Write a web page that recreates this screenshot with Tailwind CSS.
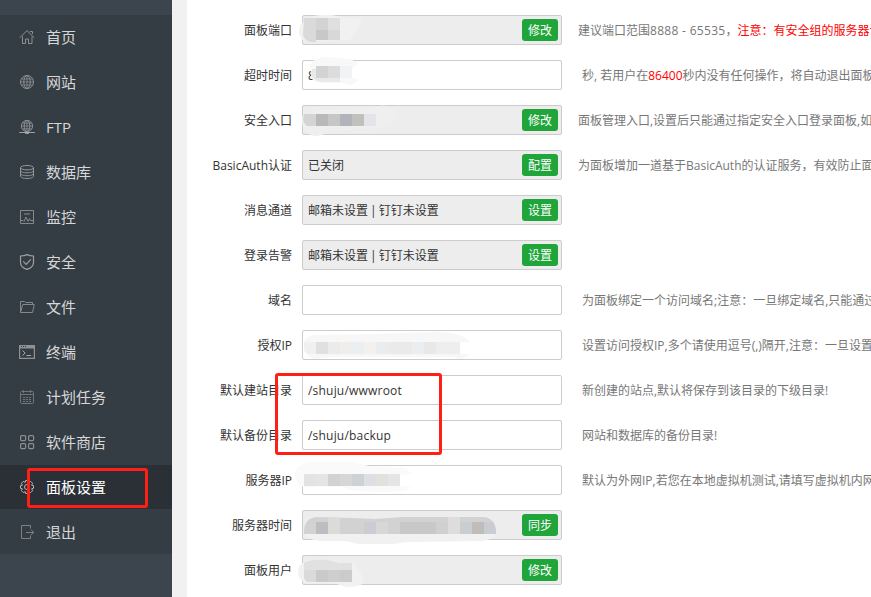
<!DOCTYPE html>
<html lang="zh-CN">
<head>
    <meta charset="UTF-8">
    <meta name="viewport" content="width=device-width, initial-scale=1.0">
    <title>面板设置</title>
    <script src="https://cdn.jsdelivr.net/npm/@tailwindcss/browser@4"></script>
</head>
<body class="relative flex h-[597px] w-[871px] overflow-hidden bg-white font-['Open_Sans','Noto_Sans_CJK_SC',sans-serif] text-xs text-[#333]">

    <!-- Sidebar -->
    <aside class="w-[172px] shrink-0 bg-[#3c444d] pt-[15px]">
        <nav class="bg-[#353d44] text-[15px] text-[#d6d7d9]">
            <a class="flex h-[45px] items-center gap-[11px] pb-px pl-[19px]">
                <svg class="size-4 shrink-0" viewBox="0 0 16 16" fill="none" stroke="#8d9194"><path d="M.8 8.7 8 1.6l7.200 7.100M3.500 7.500v7h3V10h3v4.500h3.500v-7M11 2.500h2.500V5"/></svg>
                <span>首页</span>
            </a>
            <a class="flex h-[45px] items-center gap-[11px] pb-px pl-[19px]">
                <svg class="size-4 shrink-0" viewBox="0 0 16 16" fill="none" stroke="#8d9194"><circle cx="8" cy="8" r="6.500"/><ellipse cx="8" cy="8" rx="3.200" ry="6.500"/><path d="M8 1.500v13M1.500 8h13M2.500 5h11M2.500 11h11" stroke-width=".8"/></svg>
                <span>网站</span>
            </a>
            <a class="flex h-[45px] items-center gap-[11px] pb-px pl-[19px]">
                <svg class="size-4 shrink-0" viewBox="0 0 16 16" fill="none" stroke="#8d9194"><circle cx="8" cy="7" r="5.600"/><ellipse cx="8" cy="7" rx="2.800" ry="5.600"/><path d="M8 1.500v11M2.400 7h11.200M3.500 4.200h9M3.500 9.800h9" stroke-width=".8"/><path d="M.2 13.500h15.600" stroke="#a0a3a5"/><path d="M6.200 13.900h3.600" stroke="#a9abad" stroke-width="2"/></svg>
                <span>FTP</span>
            </a>
            <a class="flex h-[45px] items-center gap-[11px] pb-px pl-[19px]">
                <svg class="size-4 shrink-0" viewBox="0 0 16 16" fill="none" stroke="#94989b"><ellipse cx="8" cy="3.700" rx="6.500" ry="2.200"/><path d="M1.500 3.700v8.600c0 1.200 3 2.200 6.500 2.200s6.500-1 6.500-2.200V3.700M1.500 6.700c0 1.200 3 2.100 6.500 2.100s6.500-.9 6.500-2.100M1.500 9.600c0 1.200 3 2.100 6.500 2.100s6.500-.9 6.500-2.100"/></svg>
                <span>数据库</span>
            </a>
            <a class="flex h-[45px] items-center gap-[11px] pb-px pl-[19px]">
                <svg class="size-4 shrink-0" viewBox="0 0 16 16" fill="none" stroke="#85898c"><path d="M1.500 1.500h13v13h-13z"/><path d="M5 4.500h6M5 5.500h6" stroke="#5d646a"/><path d="M2 11.500h2l1 1 2-4.500 2 4.500 1.500-3 1 2H14"/></svg>
                <span>监控</span>
            </a>
            <a class="flex h-[45px] items-center gap-[11px] pb-px pl-[19px]">
                <svg class="size-4 shrink-0" viewBox="0 0 16 16" fill="none" stroke="#9da0a2" stroke-width="1.200"><path d="M8 .6c-2 .9-4.300 1.300-6.500 1.400v6.400c0 3.600 3.100 5.800 6.500 7 3.400-1.200 6.500-3.400 6.500-7V2C12.300 1.900 10 1.500 8 .6z"/><path d="m4.200 7.400 3 3 4.600-5"/></svg>
                <span>安全</span>
            </a>
            <a class="flex h-[45px] items-center gap-[11px] pb-px pl-[19px]">
                <svg class="size-4 shrink-0" viewBox="0 0 16 16" fill="none" stroke="#85898c"><path d="M1.500 13.500v-11h4l1 1h7v2M1.500 13.500l2.300-8h11.500l-1.800 8h-12z" stroke-linejoin="round"/></svg>
                <span>文件</span>
            </a>
            <a class="flex h-[45px] items-center gap-[11px] pb-px pl-[19px]">
                <svg class="size-4 shrink-0" viewBox="0 0 16 16" fill="none" stroke="#8f9295"><path d="M.6 1.500h14.800v12.900H.6z" stroke-width="1.200"/><path d="M1 3h14" stroke-width="3"/><path d="M2 2.500h1M4 2.500h1M6 2.500h1" stroke="#353d44"/><path d="M3.500 6.500 6.200 9l-2.700 2.500M7.500 11.500H12" stroke="#a9abad"/></svg>
                <span>终端</span>
            </a>
            <a class="flex h-[45px] items-center gap-[11px] pb-px pl-[19px]">
                <svg class="size-4 shrink-0" viewBox="0 0 16 16" fill="none" stroke="#70767a"><rect x="1.500" y="2.500" width="13" height="12" rx="1"/><path d="M1.500 5.500h13M4.500 1v3M11.500 1v3"/><path d="M4 8.500h9M4 10.500h9M4 12.500h9" stroke-dasharray="2 1"/></svg>
                <span>计划任务</span>
            </a>
            <a class="flex h-[45px] items-center gap-[11px] pb-px pl-[19px]">
                <svg class="size-4 shrink-0" viewBox="0 0 16 16" fill="none" stroke="#8b8f92" stroke-width="1.200"><rect x="1.600" y="1.600" width="5" height="5" rx="1"/><rect x="9.600" y="1.600" width="5" height="5" rx="1"/><rect x="1.600" y="9.600" width="5" height="5" rx="1"/><rect x="9.600" y="9.600" width="5" height="5" rx="1"/></svg>
                <span>软件商店</span>
            </a>
            <a class="flex h-11 items-center gap-[11px] bg-[#2b2f36] pl-[19px] text-white">
                <svg class="size-4 shrink-0" viewBox="0 0 16 16" fill="none" stroke="#b5b7b9"><path d="M6.700 1.500h2.600l.5 1.900 1.900-1 1.900 1.900-1 1.900 1.900.5v2.600l-1.900.5 1 1.900-1.900 1.900-1.900-1-.5 1.900H6.700l-.5-1.900-1.900 1-1.900-1.900 1-1.900-1.900-.5V6.700l1.900-.5-1-1.900 1.900-1.900 1.900 1z" stroke-linejoin="round"/><circle cx="8" cy="8" r="2.500"/></svg>
                <span>面板设置</span>
            </a>
            <a class="flex h-[45px] items-center gap-[11px] pt-px pl-[19px]">
                <svg class="size-4 shrink-0" viewBox="0 0 16 16" fill="none" stroke="#7c8185"><path d="M11.500 4.500v-3h-9v13h9v-3M7 8.500h7.500M12 5.500l2.700 3-2.700 2.500"/></svg>
                <span>退出</span>
            </a>
        </nav>
    </aside>
    <div class="w-[15px] shrink-0 bg-[#f1f1f1]"></div>

    <!-- Settings form -->
    <main class="flex w-[684px] shrink-0 flex-col gap-[15px] pt-[15px] leading-[32px] whitespace-nowrap">
        <div class="flex h-[30px]">
            <label class="w-[105px] shrink-0 text-right">面板端口</label>
            <div class="relative ml-2.5 flex w-[260px] shrink-0 items-center justify-end rounded-xs border border-[#ccc] bg-[#ededed] pr-[3px]">
                <svg class="absolute -top-px -left-px overflow-visible" width="260" height="30">
                    <path d="M-3 15Q-1 4 12 1q15-3 26 1l22 2-4 10-8 11-30 1H2Q-3 23-3 15z" fill="#f1f1f1"/>
                    <path d="M2 3h12v24H8Q2 25 1 20z" fill="#dadada"/><path d="M14 3h12v12H14z" fill="#d4d2d5"/><path d="M26 3h12v12H26z" fill="#dfdfe0"/><path d="M14 15h12v10H14z" fill="#c9c8c9"/><path d="M26 15h12v10H26z" fill="#d8d8d9"/>
                </svg>
                <button class="h-[22px] w-9 rounded-[3px] bg-[#20a53a] leading-[24px] text-white">修改</button>
            </div>
            <span class="ml-4 text-[#777]">建议端口范围<span class="tracking-[0.3px]">8888 - 65535</span>，<span class="text-[#f00]">注意：有安全组的服务器请提前</span></span>
        </div>
        <div class="flex h-[30px]">
            <label class="w-[105px] shrink-0 text-right">超时时间</label>
            <div class="relative ml-2.5 w-[260px] shrink-0 rounded-xs border border-[#ccc] pl-[5px] leading-[30px]">8
                <svg class="absolute -top-px -left-px overflow-visible" width="260" height="30">
                    <path d="M8 5Q12-3 25-3l23 2 8 4-6 6v9l6 1-2 4-6 2-8-2H18Q8 22 9 13z" fill="#f8f8f8"/>
                    <path d="M10 9h28v13H20Q11 21 9 15z" fill="#e9e9e9"/><path d="M14 6h12v12H14z" fill="#d1d4d3"/><path d="M26 6h12v12H26z" fill="#dcdcdc"/><path d="M38 6h12v12H38z" fill="#f1f3f4"/>
                </svg>
            </div>
            <span class="ml-5 text-[#777]">秒, 若用户在<span class="text-[#f00]">86400</span>秒内没有任何操作，将自动退出面板</span>
        </div>
        <div class="flex h-[30px]">
            <label class="w-[105px] shrink-0 text-right">安全入口</label>
            <div class="relative ml-2.5 flex w-[260px] shrink-0 items-center justify-end rounded-xs border border-[#ccc] bg-[#ededed] pr-[3px]">
                <svg class="absolute -top-px -left-px overflow-visible" width="260" height="30">
                    <path d="M0 12Q4 6 20 5L70 3q12-5 20 0l7 6-8 10-12 4-52 3q-3 5-12 5Q-1 29 0 12z" fill="#efefef"/>
                    <path d="M2 9h12v12H6Q2 20 1 15z" fill="#d4d4d4"/><path d="M14 9h12v12H14z" fill="#b9b9ba"/><path d="M26 9h12v12H26z" fill="#c6c6c4"/><path d="M38 9h12v12H38z" fill="#b3b4bb"/><path d="M50 9h12v12H50z" fill="#c0c1bc"/><path d="M62 9h12v12H62z" fill="#e4e5e8"/>
                </svg>
                <button class="h-[22px] w-9 rounded-[3px] bg-[#20a53a] leading-[24px] text-white">修改</button>
            </div>
            <span class="ml-4 text-[#777]">面板管理入口,设置后只能通过指定安全入口登录面板,如: /</span>
        </div>
        <div class="flex h-[30px]">
            <label class="w-[105px] shrink-0 text-right">BasicAuth认证</label>
            <div class="ml-2.5 flex w-[260px] shrink-0 items-center justify-between rounded-xs border border-[#ccc] bg-[#ededed] pr-[3px] pl-[5px]">
                <span class="pt-0.5">已关闭</span>
                <button class="h-[22px] w-9 rounded-[3px] bg-[#20a53a] leading-[24px] text-white">配置</button>
            </div>
            <span class="ml-4 text-[#777]">为面板增加一道基于BasicAuth的认证服务，有效防止面板</span>
        </div>
        <div class="flex h-[30px]">
            <label class="w-[105px] shrink-0 text-right">消息通道</label>
            <div class="ml-2.5 flex w-[260px] shrink-0 items-center justify-between rounded-xs border border-[#ccc] bg-[#ededed] pr-[3px] pl-[5px]">
                <span class="pt-0.5 [word-spacing:-1px]">邮箱未设置 | 钉钉未设置</span>
                <button class="h-[22px] w-9 rounded-[3px] bg-[#20a53a] leading-[24px] text-white">设置</button>
            </div>
        </div>
        <div class="flex h-[30px]">
            <label class="w-[105px] shrink-0 text-right">登录告警</label>
            <div class="ml-2.5 flex w-[260px] shrink-0 items-center justify-between rounded-xs border border-[#ccc] bg-[#ededed] pr-[3px] pl-[5px]">
                <span class="pt-0.5 [word-spacing:-1px]">邮箱未设置 | 钉钉未设置</span>
                <button class="h-[22px] w-9 rounded-[3px] bg-[#20a53a] leading-[24px] text-white">设置</button>
            </div>
        </div>
        <div class="flex h-[30px]">
            <label class="w-[105px] shrink-0 text-right">域名</label>
            <div class="ml-2.5 w-[260px] shrink-0 rounded-xs border border-[#ccc]"></div>
            <span class="ml-5 text-[#777]">为面板绑定一个访问域名;注意：一旦绑定域名,只能通过域名</span>
        </div>
        <div class="flex h-[30px]">
            <label class="w-[105px] shrink-0 text-right">授权IP</label>
            <div class="relative ml-2.5 w-[260px] shrink-0 rounded-xs border border-[#ccc]">
                <svg class="absolute -top-px -left-px overflow-visible" width="260" height="30">
                    <path d="M2 12Q4 5 14 5l60-1 60-2q26 0 34 10h-10v12h10l-4 3-5 2-8-2H28l-14 2Q2 28 2 12z" fill="#f7f7f7"/>
                    <path d="M2 12h12v12H8Q2 24 2 18z" fill="#f0f0f0"/><path d="M14 12h12v12H14z" fill="#e0e0e1"/><path d="M26 12h12v12H26z" fill="#ebebeb"/><path d="M38 12h12v12H38z" fill="#efeeec"/><path d="M50 12h12v12H50z" fill="#ebeff2"/><path d="M62 12h12v12H62z" fill="#f2f1ee"/><path d="M74 12h12v12H74z" fill="#e9edef"/><path d="M86 12h24v12H86z" fill="#eaeaea"/><path d="M110 12h12v12h-12z" fill="#ebeef1"/><path d="M122 12h12v12h-12z" fill="#e8e8e8"/><path d="M134 12h24v12h-24z" fill="#eee"/>
                </svg>
            </div>
            <span class="ml-5 text-[#777]">设置访问授权IP,多个请使用逗号(,)隔开,注意：一旦设置授权</span>
        </div>
        <div class="flex h-[30px]">
            <label class="w-[105px] shrink-0 text-right">默认建站目录</label>
            <div class="ml-2.5 w-[260px] shrink-0 rounded-xs border border-[#ccc] pl-[5px] leading-[30px] tracking-[0.2px]">/shuju/wwwroot</div>
            <span class="ml-5 text-[#777]">新创建的站点,默认将保存到该目录的下级目录!</span>
        </div>
        <div class="flex h-[30px]">
            <label class="w-[105px] shrink-0 text-right">默认备份目录</label>
            <div class="ml-2.5 w-[260px] shrink-0 rounded-xs border border-[#ccc] pl-[5px] leading-[30px] tracking-[0.2px]">/shuju/backup</div>
            <span class="ml-5 text-[#777]">网站和数据库的备份目录!</span>
        </div>
        <div class="flex h-[30px]">
            <label class="w-[105px] shrink-0 text-right">服务器IP</label>
            <div class="relative ml-2.5 w-[260px] shrink-0 rounded-xs border border-[#ccc]">
                <svg class="absolute -top-px -left-px overflow-visible" width="260" height="30">
                    <path d="M-7 8Q-4-2 10-3h40l17 4 35 2 8 5-12 2v11l12 1-8 4-20 1-30-1-12-4H2Q-7 20-7 8z" fill="#fafafa"/>
                    <path d="M2 9h12v12H2z" fill="#e2e3e2"/><path d="M14 9h12v12H14z" fill="#e6e4e5"/><path d="M26 9h12v12H26z" fill="#d2d2d2"/><path d="M38 9h12v12H38z" fill="#d6d6d7"/><path d="M50 9h12v12H50z" fill="#ced2d4"/><path d="M62 9h12v12H62z" fill="#dedfe1"/><path d="M74 9h12v12H74z" fill="#e1e2dd"/><path d="M86 9h12v12H86z" fill="#e5e5e6"/>
                </svg>
            </div>
            <span class="ml-5 text-[#777]">默认为外网IP,若您在本地虚拟机测试,请填写虚拟机内网IP</span>
        </div>
        <div class="flex h-[30px]">
            <label class="w-[105px] shrink-0 text-right">服务器时间</label>
            <div class="relative ml-2.5 flex w-[260px] shrink-0 items-center justify-end rounded-xs border border-[#ccc] bg-[#ededed] pr-[3px]">
                <svg class="absolute -top-px -left-px overflow-visible" width="260" height="30">
                    <defs><clipPath id="time"><path d="M2 24Q1 9 14 7l35 1 25 1 26-2h80q14 0 14 17z"/></clipPath></defs>
                    <path d="M2 22h192q0 5-5 7l-9 2-75 1-14 2H56l-12-3H18Q4 30 2 22z" fill="#f1f1f1"/>
                    <g clip-path="url(#time)"><path d="M2 6h192v18H2z" fill="#d2d2d2"/><path d="M14 12h12v12H14z" fill="#bdbdc1"/><path d="M26 6h12v18H26z" fill="#dbdbda"/><path d="M62 12h12v12H62z" fill="#cacdd1"/><path d="M74 12h12v12H74z" fill="#d6d7d6"/><path d="M98 12h36v12H98z" fill="#c8c8ca"/><path d="M134 12h12v12h-12z" fill="#d2cfcf"/><path d="M146 6h12v18h-12z" fill="#dedddc"/><path d="M158 12h12v12h-12z" fill="#c9cece"/><path d="M170 12h12v12h-12z" fill="#bfbdba"/><path d="M182 12h12v12h-12z" fill="#c9cdd1"/></g>
                </svg>
                <button class="h-[22px] w-9 rounded-[3px] bg-[#20a53a] leading-[24px] text-white">同步</button>
            </div>
        </div>
        <div class="flex h-[30px]">
            <label class="w-[105px] shrink-0 text-right">面板用户</label>
            <div class="relative ml-2.5 flex w-[260px] shrink-0 items-center justify-end rounded-xs border border-[#ccc] bg-[#ededed] pr-[3px]">
                <svg class="absolute -top-px -left-px overflow-visible" width="260" height="30">
                    <path d="M-4 15Q-2 6 10 5h20l10 3h12l6 9 5 10q-4 5-18 5l-14-4H4Q-4 26-4 15z" fill="#f1f1f1"/>
                    <path d="M2 8q6-4 24-3l12 3h12v7H2z" fill="#e1e1e1"/><path d="M2 15h12v12H6q-4-1-4-5z" fill="#dadada"/><path d="M14 15h12v12H14z" fill="#c9cacb"/><path d="M26 15h12v12H26z" fill="#cdcfcf"/><path d="M38 15h12v12H38z" fill="#cbcbcb"/>
                </svg>
                <button class="h-[22px] w-9 rounded-[3px] bg-[#20a53a] leading-[24px] text-white">修改</button>
            </div>
        </div>
    </main>

    <!-- Highlight frames -->
    <div class="absolute top-[373px] left-[275px] h-[82px] w-[167px] rounded-[3px] border-3 border-[#ff2015]"></div>
    <div class="absolute top-[468px] left-[27px] h-10 w-[121px] rounded-[3px] border-3 border-[#ff2015]"></div>
</body>
</html>
